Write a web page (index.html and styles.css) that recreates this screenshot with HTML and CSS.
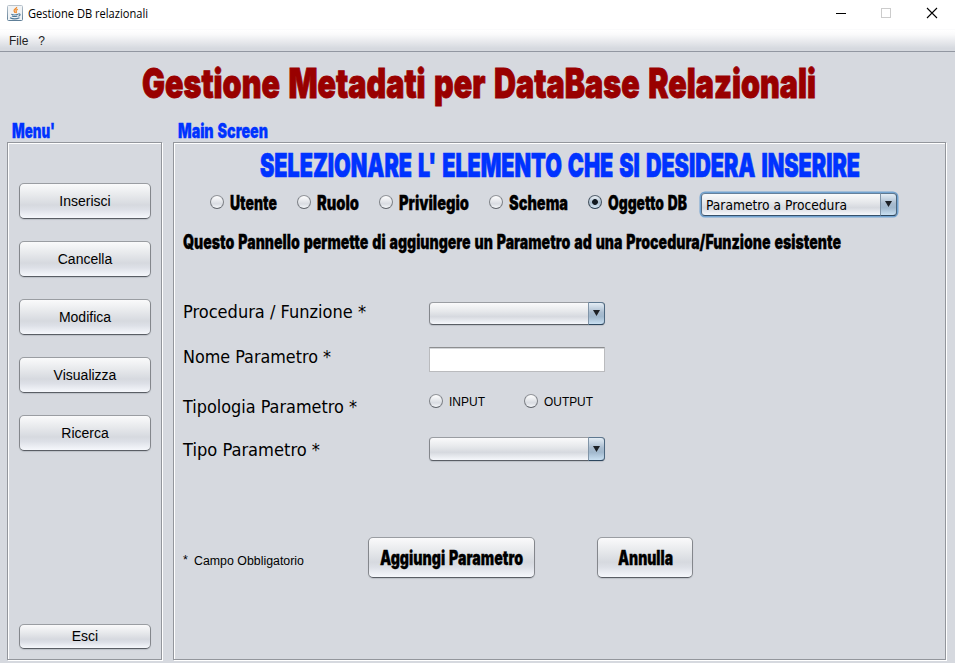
FILE: index.html
```html
<!DOCTYPE html>
<html lang="it">
<head>
<meta charset="utf-8">
<title>Gestione DB relazionali</title>
<link rel="stylesheet" href="styles.css">
</head>
<body>
<header class="titlebar">
  <svg class="app-icon" width="16" height="16" viewBox="0 0 16 16">
    <defs><linearGradient id="ig" x2="0" y2="1"><stop offset="0" stop-color="#b9c3cc"/><stop offset="1" stop-color="#5f7f98"/></linearGradient></defs>
    <rect x=".5" y=".5" width="15" height="15" rx="1" fill="#f1f4f6" stroke="url(#ig)"/>
    <path d="M9.600 2c.6 1.500-3.200 2.300-2.500 4 .3.700.9 1 .9 2M10.800 4.300c-1.500.5-2.300 1.100-1.600 2.100.4.600.2 1.100-.4 1.500" fill="none" stroke="#ef8b2e" stroke-width="1.300"/>
    <path d="M4.300 9.300c1.500.7 5 .7 6.800 0M4.900 11c1.500.6 4 .6 5.500 0M3 12.700c2.500 1.200 7 1.200 9.500 0M11.300 9c2.400-.7 2.400 1.700 0 2.200" fill="none" stroke="#4d7898" stroke-width="1.100"/>
  </svg>
  <svg class="ui" width="121" height="16"><text x="0" y="12" textLength="120" lengthAdjust="spacingAndGlyphs">Gestione DB relazionali</text></svg>
  <svg class="controls" width="102" height="12" viewBox="0 0 102 12" shape-rendering="crispEdges">
    <path d="M0 6.500h10" stroke="#000"/>
    <rect x="45.500" y="1.500" width="9" height="9" fill="none" stroke="#ccc"/>
    <path d="M91 1l10 10M101 1l-10 10" stroke="#000" stroke-width="1.100" shape-rendering="auto"/>
  </svg>
</header>
<nav class="menubar"><span>File</span><span>?</span></nav>
<h1 class="title"><svg class="impact s-title" width="680" height="56"><text x="1" y="43" textLength="674" lengthAdjust="spacingAndGlyphs">Gestione Metadati per DataBase Relazionali</text></svg></h1>

<main class="columns">
  <section class="col-menu">
    <h2 class="caption"><svg class="impact blue" width="43" height="20"><text x="0" y="16" textLength="43" lengthAdjust="spacingAndGlyphs">Menu'</text></svg></h2>
    <div class="panel menu">
      <button class="btn">Inserisci</button>
      <button class="btn">Cancella</button>
      <button class="btn">Modifica</button>
      <button class="btn">Visualizza</button>
      <button class="btn">Ricerca</button>
      <button class="btn exit">Esci</button>
    </div>
  </section>

  <section class="col-main">
    <h2 class="caption"><svg class="impact blue" width="90" height="20"><text x="0" y="16" textLength="90" lengthAdjust="spacingAndGlyphs">Main Screen</text></svg></h2>
    <div class="panel screen">
      <h3 class="prompt"><svg class="impact blue s-prompt" width="606" height="46"><text x="0" y="34" textLength="600" lengthAdjust="spacingAndGlyphs">SELEZIONARE L' ELEMENTO CHE SI DESIDERA INSERIRE</text></svg></h3>

      <div class="kinds">
        <label class="kind k1"><i class="radio"></i><svg class="impact" width="47" height="20"><text x="0" y="16" textLength="47" lengthAdjust="spacingAndGlyphs">Utente</text></svg></label>
        <label class="kind k2"><i class="radio"></i><svg class="impact" width="42" height="20"><text x="0" y="16" textLength="42" lengthAdjust="spacingAndGlyphs">Ruolo</text></svg></label>
        <label class="kind k3"><i class="radio"></i><svg class="impact" width="70" height="20"><text x="0" y="16" textLength="70" lengthAdjust="spacingAndGlyphs">Privilegio</text></svg></label>
        <label class="kind k4"><i class="radio"></i><svg class="impact" width="59" height="20"><text x="0" y="16" textLength="59" lengthAdjust="spacingAndGlyphs">Schema</text></svg></label>
        <label class="kind k5"><i class="radio on"></i><svg class="impact" width="79" height="20"><text x="0" y="16" textLength="79" lengthAdjust="spacingAndGlyphs">Oggetto DB</text></svg></label>
        <div class="combo focus"><svg class="tahoma s-combo" width="142" height="20"><text x="0" y="15" textLength="141" lengthAdjust="spacingAndGlyphs">Parametro a Procedura</text></svg><span class="arrow"><svg width="7" height="6"><path d="M0 0h7l-3.500 6z"/></svg></span></div>
      </div>

      <p class="note"><svg class="impact" width="664" height="26"><text x="0" y="19" textLength="658" lengthAdjust="spacingAndGlyphs">Questo Pannello permette di aggiungere un Parametro ad una Procedura/Funzione esistente</text></svg></p>

      <div class="form">
        <div class="row r1">
          <svg class="tahoma" width="246" height="24"><text x="0" y="17" textLength="183" lengthAdjust="spacingAndGlyphs">Procedura / Funzione *</text></svg>
          <div class="combo"><span class="arrow"><svg width="7" height="6"><path d="M0 0h7l-3.500 6z"/></svg></span></div>
        </div>
        <div class="row r2">
          <svg class="tahoma" width="246" height="24"><text x="0" y="17" textLength="148" lengthAdjust="spacingAndGlyphs">Nome Parametro *</text></svg>
          <input class="field" type="text">
        </div>
        <div class="row r3">
          <svg class="tahoma" width="246" height="24"><text x="0" y="17" textLength="174" lengthAdjust="spacingAndGlyphs">Tipologia Parametro *</text></svg>
          <label class="io"><i class="radio"></i><svg class="arial" width="36" height="16"><text x="0" y="12" textLength="36" lengthAdjust="spacingAndGlyphs">INPUT</text></svg></label>
          <label class="io out"><i class="radio"></i><svg class="arial" width="49" height="16"><text x="0" y="12" textLength="49" lengthAdjust="spacingAndGlyphs">OUTPUT</text></svg></label>
        </div>
        <div class="row r4">
          <svg class="tahoma" width="246" height="24"><text x="0" y="17" textLength="137" lengthAdjust="spacingAndGlyphs">Tipo Parametro *</text></svg>
          <div class="combo tall"><span class="arrow"><svg width="7" height="6"><path d="M0 0h7l-3.500 6z"/></svg></span></div>
        </div>
      </div>

      <div class="actions">
        <span class="required"><span>*</span><svg class="arial" width="110" height="16"><text x="0" y="13" textLength="110" lengthAdjust="spacingAndGlyphs">Campo Obbligatorio</text></svg></span>
        <button class="btn add"><svg class="impact" width="143" height="20"><text x="0" y="17" textLength="143" lengthAdjust="spacingAndGlyphs">Aggiungi Parametro</text></svg></button>
        <button class="btn cancel"><svg class="impact" width="55" height="20"><text x="0" y="17" textLength="55" lengthAdjust="spacingAndGlyphs">Annulla</text></svg></button>
      </div>
    </div>
  </section>
</main>
</body>
</html>
```
FILE: styles.css
```css
* { box-sizing: border-box; }
html, body { height: 100%; overflow: hidden; }
body {
  margin: 0;
  display: flex;
  flex-direction: column;
  background: #d6d9df;
  color: #000;
  font-family: "Liberation Sans", Arial, sans-serif;
}
h1, h2, h3, p { margin: 0; font-size: 0; }
svg { display: block; flex: none; overflow: visible; }
button { font-family: inherit; }

.impact { font: 900 19.500px Inter, sans-serif; word-spacing: .08em; stroke: #000; stroke-width: .3px; }
.impact.blue { fill: #0033ff; stroke: #0033ff; }
.impact.s-title { font-size: 41px; fill: #990000; stroke: #990000; stroke-width: .9px; }
.impact.s-prompt { font-size: 33px; stroke-width: .7px; }
.tahoma { font: 18px "DejaVu Sans Condensed", "DejaVu Sans", sans-serif; }
.tahoma.s-combo { font-size: 14px; }
.arial { font: 12.500px "Liberation Sans", sans-serif; }
.ui { font: 12px "Open Sans", sans-serif; }

.titlebar {
  display: flex;
  flex: none;
  height: 29px;
  padding: 5px 0 0 7px;
  background: #fff;
}
.ui { margin: 1px 0 0 5px; }
.controls { margin: 2px 17px 0 auto; }

.menubar {
  display: flex;
  flex: none;
  gap: 10px;
  height: 23px;
  padding: 5px 9px 0;
  font-size: 12px;
  line-height: 14px;
  color: #222;
  border-bottom: 1px solid #9297a1;
  background: linear-gradient(#f7f8fa 0, #fff 5%, #fafafb 25%, #d6d9df 88%);
}

.title { height: 70px; flex: none; padding: 3px 0 0 141px; }

.columns { display: flex; gap: 11px; height: 538px; padding-left: 7px; }
.col-menu { width: 155px; }
.col-main { width: 773px; }
.caption { height: 20px; padding-left: 5px; }
.panel {
  height: 518px;
  border: 1px solid #93969c;
  box-shadow: inset 1px 1px #fff, 1px 1px #fff;
}

.btn {
  display: flex;
  flex: none;
  align-items: center;
  justify-content: center;
  padding: 0;
  font-size: 14px;
  color: #000;
  border: 1px solid;
  border-color: #9a9da2 #84878c #5a5e65;
  border-radius: 5px;
  background: linear-gradient(#fafafb 0, #e6e8eb 35%, #d6d9df 62%, #dde0e7 75%, #f6f8fc 100%);
  box-shadow: 0 1px 1px #bcc0c7;
}
.menu { display: flex; flex-direction: column; gap: 22px; padding: 40px 10px 10px 11px; }
.menu .btn { height: 36px; }
.menu .exit { height: 25px; margin-top: auto; padding-bottom: 1px; }

.prompt { height: 49px; padding: 0 0 0 86px; }
.kinds { display: flex; height: 38px; padding-left: 36px; }
.kind { display: flex; height: 20px; margin-top: 2px; }
.kind .radio { margin: 1px 6px 0 0; }
.k2, .k3, .k4, .k5 { margin-left: 20px; }
.radio {
  flex: none;
  width: 14px;
  height: 14px;
  border: 1px solid;
  border-color: #92959a #7d8086 #5e6269;
  border-radius: 50%;
  background: linear-gradient(#fff, #d9dce2 65%, #f5f7fa);
}
.radio.on {
  border-color: #55626f #43505d #25394c;
  background: radial-gradient(circle, #111820 0 2.500px, transparent 3.300px), linear-gradient(#edf2f7, #a9bdcf 55%, #d5e5f3);
}

.combo {
  display: flex;
  justify-content: flex-end;
  width: 176px;
  height: 23px;
  border: 1px solid;
  border-color: #9a9da2 #84878c #5a5e65;
  border-radius: 4px;
  background: linear-gradient(#fafafb 0, #e6e8eb 40%, #d6d9df 65%, #f6f8fc 100%);
  box-shadow: 0 1px 1px #bcc0c7;
}
.combo.tall { height: 24px; margin-top: -3px; }
.arrow {
  display: flex;
  align-items: center;
  justify-content: center;
  width: 17px;
  margin: -1px -1px -1px 0;
  border: 1px solid;
  border-color: #5e7890 #4b667e #2c465e #8195a8;
  border-radius: 0 4px 4px 0;
  background: linear-gradient(#e4edf5 0, #a9bccf 45%, #a1b8cd 65%, #c9e0f2 100%);
}
.arrow svg { fill: #1d2126; margin-top: -1px; }
.combo.focus {
  justify-content: space-between;
  width: 196px;
  height: 23px;
  margin: 1px 0 0 14px;
  padding-left: 4px;
  border-color: #65809b #526d88 #36516c;
  box-shadow: 0 0 0 1.500px #73a4d1;
}
.focus .tahoma { margin-top: 1px; }

.note { height: 72px; padding: 0 0 0 9px; }
.form { padding-left: 9px; }
.row { display: flex; }
.row .tahoma { margin-top: -1px; }
.r1 { height: 45px; }
.r2 { height: 47px; }
.r3 { height: 43px; margin-top: 3px; }
.r4 { height: 97px; }
.field {
  width: 176px;
  height: 25px;
  margin: 0;
  padding: 0 6px;
  border: 1px solid;
  border-color: #8d8e90 #babbbe #babbbe;
  border-radius: 0;
  background: #fff;
  box-shadow: inset 0 1px #d4d6d9;
}
.io { display: flex; height: 16px; margin-top: -3px; }
.io .radio { margin: 0 6px 0 0; }
.io.out { margin-left: 39px; }

.actions { display: flex; padding-left: 9px; }
.required { display: flex; width: 185px; margin-top: 15px; font-size: 12.500px; line-height: 16px; }
.required > span { width: 11px; }
.actions .btn { height: 41px; }
.add { width: 167px; }
.cancel { width: 96px; margin-left: 62px; }
```
